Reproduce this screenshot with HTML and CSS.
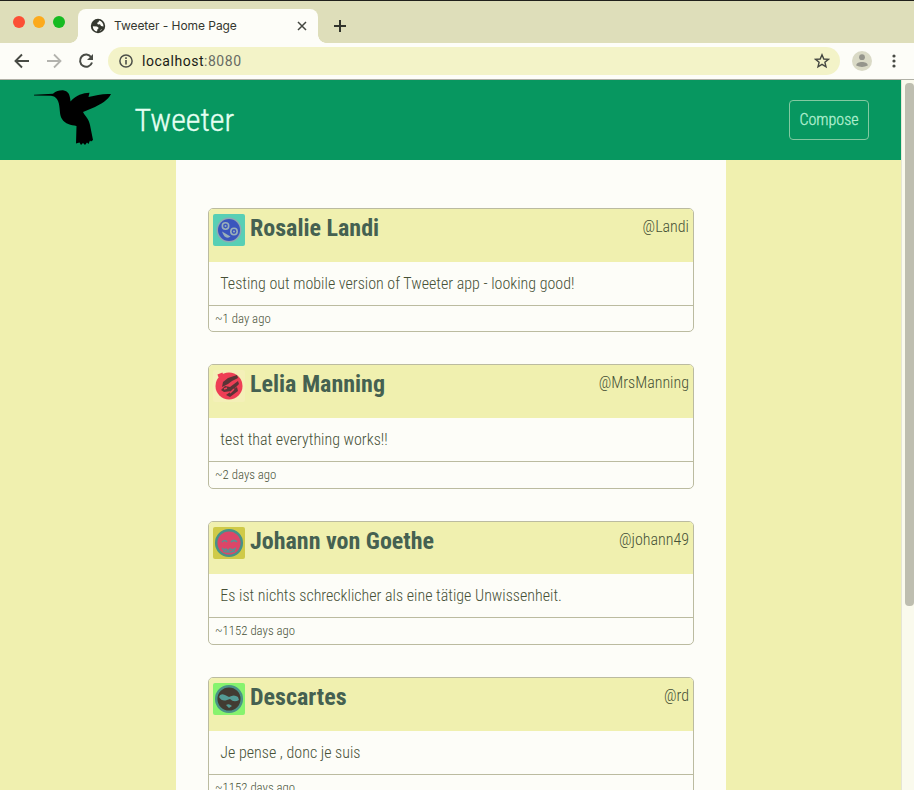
FILE: index.html
```html
<!DOCTYPE html>
<html lang="en">
<head>
<meta charset="utf-8">
<title>Tweeter - Home Page</title>
<link rel="stylesheet" href="styles.css">
</head>
<body>
<div class="tabs">
  <div class="lights"><i class="red"></i><i class="amber"></i><i class="green"></i></div>
  <div class="tab">
    <svg class="globe" width="16" height="16" viewBox="0 0 16 16"><circle cx="8" cy="8" r="7.2" fill="#35382f"/><path d="M2.8 8.2 7 8.5 8.8 10 7.5 11.2 7 13.5C4.5 13 2.8 11 2.8 8.2M9 2.5 8.6 4 7 5 8 6.5 10 6.2 11 8 13.5 8.5C13.5 5.5 12 3.2 9 2.5M9.5 13.2 11 11.5 12.2 11.5Z" fill="#fdfdf8"/></svg>
    <span class="tabtitle">Tweeter - Home Page</span>
    <svg width="10" height="10" viewBox="0 0 10 10"><path d="M1 1 9 9M9 1 1 9" stroke="#444740" stroke-width="1.5"/></svg>
  </div>
  <svg class="plus" width="12" height="12" viewBox="0 0 12 12"><path d="M6 0V12M0 6H12" stroke="#30332b" stroke-width="2"/></svg>
</div>
<div class="toolbar">
  <svg width="16" height="16" viewBox="0 0 16 16" fill="none" stroke="#484b45" stroke-width="1.9"><path d="M15 8H2M8 1.5 1.5 8 8 14.5"/></svg>
  <svg width="16" height="16" viewBox="0 0 16 16" fill="none" stroke="#b3b3ae" stroke-width="1.8"><path d="M1 8H14M8 1.5 14.5 8 8 14.5"/></svg>
  <svg width="16" height="16" viewBox="0 0 16 16"><path d="M13.2 4.2A6.1 6.1 0 1 0 14 9.5" fill="none" stroke="#484b45" stroke-width="2"/><path d="M15 1V7H9Z" fill="#484b45"/></svg>
  <div class="address">
    <svg width="14" height="14" viewBox="0 0 14 14"><circle cx="7" cy="7" r="6.1" fill="none" stroke="#4c4f49" stroke-width="1.5"/><path d="M6.2 6H7.8V10.5H6.2ZM6.2 3.3H7.8V4.9H6.2Z" fill="#4c4f49"/></svg>
    <span class="url">localhost<b>:8080</b></span>
    <svg class="star" width="16" height="16" viewBox="0 0 16 16"><path d="M8 1.8 9.8 6 14.4 6.4 10.9 9.3 12 13.8 8 11.4 4 13.8 5.1 9.3 1.6 6.4 6.2 6Z" fill="none" stroke="#444740" stroke-width="1.4"/></svg>
  </div>
  <svg class="profile" width="20" height="20" viewBox="0 0 20 20"><circle cx="10" cy="10" r="10" fill="#dadac6"/><circle cx="10" cy="6.2" r="2.9" fill="#95958c"/><path d="M4.2 14.5C4.5 11.8 7 11 10 11S15.5 11.8 15.8 14.5Q10 17.3 4.2 14.5" fill="#95958c"/></svg>
  <svg class="dots" width="4" height="14" viewBox="0 0 4 14" fill="#484b45"><circle cx="2" cy="2" r="1.6"/><circle cx="2" cy="7" r="1.6"/><circle cx="2" cy="12" r="1.6"/></svg>
</div>
<div class="viewport">
  <div class="page">
    <header class="nav">
      <svg class="bird" width="78" height="56" viewBox="0 0 78 56"><path d="M0 4.7 19 3.8C22 1 25.5.2 29 .3 34 1 36 4 36.500 11.500 42 5 49 3 55.500 2.800L54.500 7C62 5 69 3.500 77 4 74 10 67 14 61 17L49 22C51 26 55 29 56 35L59 50 57 51.500 56 50.500 54.500 54 53 52.500 51 55 49 53 47 55 45.500 52.500 42 53.500 42.500 36C37 35 31 34 28 29 25 25 26.500 17 24 11 22 7 20 6.100 17 5.800L0 5.600Z"/></svg>
      <span class="brand">Tweeter</span>
      <button class="compose">Compose</button>
    </header>
    <main class="feed">
      <article class="tweet">
        <div class="head"><svg class="avatar" width="32" height="32" viewBox="0 0 32 32"><rect width="32" height="32" rx="2" fill="#58cfb5"/><circle cx="16" cy="16" r="12.500" fill="#8fa9b3"/><circle cx="16" cy="16" r="11" fill="#3a55bd"/><g fill="#3a55bd" stroke="#9ab0ba" stroke-width="1.600"><circle cx="12.500" cy="12" r="3.200"/><circle cx="21" cy="17.500" r="3.200"/></g><circle cx="12.500" cy="12" r="1" fill="#9ab0ba"/><circle cx="21" cy="17.500" r="1" fill="#9ab0ba"/><path d="M9 17.500 17.500 22.500Q12 26.500 9 17.500Z" fill="#9ab0ba"/></svg><h2>Rosalie Landi</h2><span class="handle">@Landi</span></div>
        <p class="text">Testing out mobile version of Tweeter app - looking good!</p>
        <div class="foot">~1 day ago</div>
      </article>
      <article class="tweet">
        <div class="head"><svg class="avatar" width="32" height="32" viewBox="0 0 32 32"><rect width="32" height="32" rx="2" fill="#f4f0b8"/><circle cx="16" cy="16" r="13.500" fill="#ee3e55"/><path d="M5 6 10 4" stroke="#ee3e55" stroke-width="3"/><path d="M10 12 15 8 24 5 25 8 19 11 15 14 9 17ZM8 20 12 16 17 17 25 11 26 14 19 21 11 22ZM13 25 24 17 25 21 17 27Z" fill="#5b3437"/><path d="M11 19 14 18M17 23 21 19" stroke="#ee3e55" stroke-width="1.500"/></svg><h2>Lelia Manning</h2><span class="handle">@MrsManning</span></div>
        <p class="text">test that everything works!!</p>
        <div class="foot">~2 days ago</div>
      </article>
      <article class="tweet">
        <div class="head"><svg class="avatar" width="32" height="32" viewBox="0 0 32 32"><rect width="32" height="32" rx="2" fill="#cfca48"/><circle cx="16" cy="16" r="12.800" fill="#dc4668" stroke="#489188" stroke-width="2.500"/><path d="M9 15Q12 12 14 15M18 15Q21 12 24 15M9 21 11 23 13 22 15 24 17 22 20 23 23 21M10 24 13 25 18 25 22 24" fill="none" stroke="#5d8f93" stroke-width="1.700"/></svg><h2>Johann von Goethe</h2><span class="handle">@johann49</span></div>
        <p class="text">Es ist nichts schrecklicher als eine tätige Unwissenheit.</p>
        <div class="foot">~1152 days ago</div>
      </article>
      <article class="tweet">
        <div class="head"><svg class="avatar" width="32" height="32" viewBox="0 0 32 32"><rect width="32" height="32" rx="2" fill="#86f36e"/><circle cx="16" cy="16" r="12.800" fill="#423b32" stroke="#4a9287" stroke-width="2.500"/><path d="M6 14Q7 10 12 12L16 14Q21 11 25 14L26 17Q21 20 17 16L14 17Q9 19 6 14M13 22Q16 20 19 23L16 25Z" fill="#539b96"/></svg><h2>Descartes</h2><span class="handle">@rd</span></div>
        <p class="text">Je pense , donc je suis</p>
        <div class="foot">~1152 days ago</div>
      </article>
    </main>
  </div>
  <div class="scroll"><div class="thumb"></div></div>
</div>
</body>
</html>
```
FILE: styles.css
```css
* { box-sizing: border-box; }
html, body { margin: 0; height: 790px; overflow: hidden; }
body { display: flex; flex-direction: column; background: #fdfdf8; font-family: "Roboto Condensed", Roboto, sans-serif; font-stretch: 75%; font-weight: 300; }
svg { display: block; flex: none; }
.tabs { height: 43px; flex: none; display: flex; border-top: 1px solid #20201c; background: #dedeba; }
.lights { display: flex; gap: 8px; padding: 15px 0 0 13px; width: 78px; }
.lights i { width: 12px; height: 12px; border-radius: 50%; }
.red { background: #fc4f35; }
.amber { background: #fcaa1c; }
.green { background: #17bb22; }
.tab { width: 240px; height: 34px; margin-top: 8px; padding: 0 11px 0 12px; border-radius: 8px 8px 0 0; background: #fdfdf8; display: flex; align-items: center; position: relative; }
.tab::before, .tab::after { content: ""; position: absolute; bottom: 0; width: 8px; height: 8px; }
.tab::before { left: -8px; background: radial-gradient(circle at 0 0, transparent 7.5px, #fdfdf8 8px); }
.tab::after { right: -8px; background: radial-gradient(circle at 100% 0, transparent 7.5px, #fdfdf8 8px); }
.tabtitle { flex: 1; margin: -1px 0 0 8px; font: 12px Inter, sans-serif; color: #34372f; letter-spacing: -.06px; }
.plus { margin: 19px 0 0 16px; }
.toolbar { height: 37px; flex: none; display: flex; align-items: center; gap: 16px; padding: 0 18px 0 14px; border-bottom: 1px solid #b0b0a6; }
.address { flex: 1; margin-left: -2px; height: 28px; border-radius: 14px; background: #f3f3c8; display: flex; align-items: center; padding: 0 10px 0 11px; }
.url { flex: 1; margin-left: 9px; font: 14px Roboto, sans-serif; color: #191b16; letter-spacing: .53px; }
.url b { font-weight: 400; color: #686b63; }
.profile { margin-left: -4px; }
.dots { margin-left: 4px; }
.viewport { flex: 1; display: flex; overflow: hidden; }
.page { width: 901px; height: 710px; overflow: hidden; background: #f0f0af; }
.nav { height: 80px; display: flex; align-items: center; padding: 0 32px 0 34px; background: #079760; }
.bird { margin-top: -4px; }
.brand { flex: 1; margin-left: 22.500px; font-size: 32px; color: #e5fff2; -webkit-text-stroke: .35px #e5fff2; }
.compose { width: 80px; height: 40px; padding: 0 0 2px; border: 1px solid #83c9a1; border-radius: 4px; background: none; color: #b2efd0; font: inherit; font-size: 16px; -webkit-text-stroke: .3px #b2efd0; }
.feed { width: 550px; height: 630px; margin-left: 176px; padding: 48px 32px 0; background: #fdfdf8; overflow: hidden; }
.tweet { height: 124.400px; margin-bottom: 32px; border: 1px solid #bbbba0; border-radius: 5px; overflow: hidden; color: #465036; }
.head { height: 52.700px; display: flex; background: #f0f0af; padding: 5px 4px 0; }
h2 { flex: 1; margin: -1px 0 0 5px; font-size: 24px; line-height: 30px; font-weight: 700; color: #456151; }
.handle { font-size: 16px; line-height: 26px; }
.text { margin: 0; height: 42.900px; padding-left: 11.300px; font-size: 16px; line-height: 44px; }
.foot { border-top: 1px solid #bbbba0; padding-left: 6px; font-size: 12.800px; line-height: 25px; }
.scroll { width: 13px; padding: 3px 0 0 3px; background: #fafaed; border-left: 1px solid #e5e5d5; }
.thumb { width: 9px; height: 523px; border-radius: 4px; background: #bebeb0; }
```
